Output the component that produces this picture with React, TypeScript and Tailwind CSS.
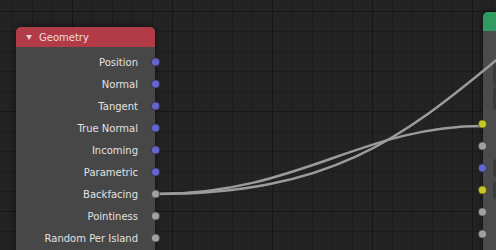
import React from "react";

type SocketKind = "vector" | "float" | "color";

const socketStyles: Record<SocketKind, string> = {
  vector: "bg-[#6565cf]",
  float: "bg-[#a1a1a1]",
  color: "bg-[#c7c729]",
};

const geometryOutputs: { label: string; kind: SocketKind }[] = [
  { label: "Position", kind: "vector" },
  { label: "Normal", kind: "vector" },
  { label: "Tangent", kind: "vector" },
  { label: "True Normal", kind: "vector" },
  { label: "Incoming", kind: "vector" },
  { label: "Parametric", kind: "vector" },
  { label: "Backfacing", kind: "float" },
  { label: "Pointiness", kind: "float" },
  { label: "Random Per Island", kind: "float" },
];

const shaderInputs: SocketKind[] = ["color", "float", "vector", "color", "float", "float"];

function Socket({ kind, className }: { kind: SocketKind; className: string }) {
  return (
    <span
      className={`absolute top-1/2 -translate-y-1/2 z-20 w-[9px] h-[9px] rounded-full border border-[#1a1a1a]/60 ${socketStyles[kind]} ${className}`}
    />
  );
}

export default function App() {
  return (
    <div
      className="relative w-[496px] h-[250px] overflow-hidden bg-[#232323] bg-[linear-gradient(to_right,#171717_1px,transparent_1px),linear-gradient(to_bottom,#171717_1px,transparent_1px),linear-gradient(to_right,#1c1c1c_1px,transparent_1px),linear-gradient(to_bottom,#1c1c1c_1px,transparent_1px)] bg-[size:100px_100px,100px_100px,20px_20px,20px_20px] bg-[position:72px_11px,72px_11px,12px_11px,12px_11px]"
      style={{ fontFamily: '"DejaVu Sans", sans-serif' }}
    >
      {/* Geometry node */}
      <div className="absolute left-[16px] top-[27px] w-[139px] h-[240px] rounded-[5px] bg-[#474747] shadow-[0_0_6px_rgba(0,0,0,0.55)]">
        <div className="flex items-center h-[20px] pl-[10px] gap-[7px] rounded-t-[5px] bg-[#b13c48] text-[10px] text-[#ecdcdc]">
          <span className="w-0 h-0 border-l-[3px] border-r-[3px] border-t-[5px] border-l-transparent border-r-transparent border-t-[#e6cfd1]" />
          <span>Geometry</span>
        </div>
        <div className="pt-[4px]">
          {geometryOutputs.map((s) => (
            <div
              key={s.label}
              className="relative flex items-center justify-end h-[22px] pr-[17px] text-[10px] text-[#e2e2e2]"
            >
              {s.label}
              <Socket kind={s.kind} className="right-[-5px]" />
            </div>
          ))}
        </div>
      </div>

      {/* shader node, cut off at the right edge */}
      <div className="absolute left-[483px] top-[12px] w-[120px] h-[250px] rounded-[5px] bg-[#4b4b4b] shadow-[0_0_6px_rgba(0,0,0,0.55)]">
        <div className="h-[19px] rounded-t-[5px] bg-[#2f9b63]" />
        <div className="flex flex-col gap-[1px] pl-[10px] pt-[32px]">
          <div className="h-[23px] rounded-l-[3px] bg-[#3a3a3a]" />
          <div className="h-[23px] rounded-l-[3px] bg-[#3a3a3a]" />
        </div>
        <div className="pt-[3px]">
          {shaderInputs.map((k, i) => (
            <div key={i} className="relative flex items-center h-[22px] pl-[10px]">
              <div className={`h-[18px] w-full rounded-l-[3px] ${i === 2 || i === 3 ? "bg-[#3a3a3a]" : ""}`} />
              <Socket kind={k} className="left-[-5px]" />
            </div>
          ))}
        </div>
      </div>

      {/* links */}
      <svg className="absolute inset-0 z-10 pointer-events-none" width="496" height="250">
        <path d="M155.5 194 C 300 194, 360 126, 483 126" fill="none" stroke="#9b9b9b" strokeWidth="2.5" />
        <path d="M155.5 194 C 330 194, 400 140, 500 57" fill="none" stroke="#9b9b9b" strokeWidth="2.5" />
      </svg>
    </div>
  );
}
